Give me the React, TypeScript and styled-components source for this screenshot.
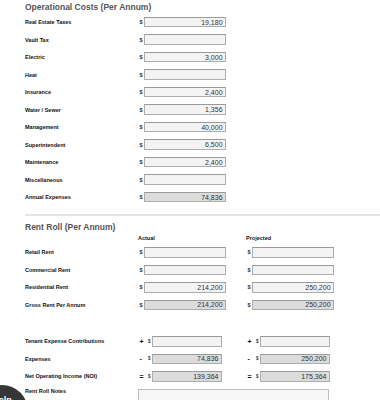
import React, { FC } from "react";
import styled, { createGlobalStyle } from "styled-components";

const GlobalStyle = createGlobalStyle`
  body {
    margin: 0;
    background: #ffffff;
    font-family: "Liberation Sans", Arial, sans-serif;
    overflow: hidden;
  }
`;

const Page = styled.div`
  padding-left: 25px;
`;

const SectionTitle = styled.h2`
  margin: 0;
  height: 13.25px;
  line-height: 15px;
  font-size: 8.5px;
  font-weight: bold;
  color: #555555;
  white-space: nowrap;
`;

const Row = styled.div<{ $height?: number }>`
  display: grid;
  grid-template-columns: 113px 108px 1fr;
  align-items: center;
  height: ${(p) => p.$height ?? 17.5}px;
`;

const Label = styled.span`
  font-size: 5.5px;
  font-weight: bold;
  color: #111111;
  white-space: nowrap;
`;

const ColumnHead = styled.span`
  font-size: 5.5px;
  font-weight: bold;
  color: #111111;
`;

const Cell = styled.div`
  display: flex;
  align-items: center;
`;

const Dollar = styled.span<{ $small?: boolean }>`
  font-size: ${(p) => (p.$small ? 4.5 : 5.5)}px;
  font-weight: bold;
  color: #333333;
  margin-left: ${(p) => (p.$small ? 0 : 1.5)}px;
  margin-right: 1.5px;
`;

const Sign = styled.span`
  width: 10px;
  padding-left: 1.5px;
  box-sizing: border-box;
  font-size: 7px;
  font-weight: bold;
  color: #111111;
`;

const Field = styled.input<{ $total?: boolean; $narrow?: boolean }>`
  box-sizing: border-box;
  width: ${(p) => (p.$narrow ? 70 : 82)}px;
  height: 10.5px;
  margin: 0;
  padding: 0 2.5px 0 2px;
  border: 1px solid #adadad;
  border-top-color: #9a9a9a;
  border-radius: 0;
  background: ${(p) => (p.$total ? "#dcdcdc" : "#f3f3f3")};
  font-family: "Liberation Sans", Arial, sans-serif;
  font-size: 7px;
  color: #333333;
  text-align: right;
  outline: none;
`;

const Divider = styled.hr`
  margin: 8.5px 0 0;
  border: 0;
  height: 1.5px;
  background: #e6e6e6;
`;

const Spacer = styled.div<{ $h: number }>`
  height: ${(p) => p.$h}px;
`;

const NotesRow = styled.div`
  display: grid;
  grid-template-columns: 113px 1fr;
  align-items: start;
`;

const NotesLabel = styled(Label)`
  padding-top: 3px;
`;

const Notes = styled.textarea`
  box-sizing: border-box;
  width: 191px;
  height: 40px;
  margin: 3.5px 0 0;
  border: 1px solid #bdbdbd;
  background: #f6f6f6;
  resize: none;
`;

const HelpButton = styled.div`
  position: fixed;
  left: -24px;
  top: 385px;
  width: 52px;
  height: 52px;
  border-radius: 50%;
  background: #363636;
  color: #ffffff;
  font-size: 9px;
  font-weight: bold;
  text-align: center;
  padding-top: 10px;
  box-sizing: border-box;
`;

const Money: FC<{ value: string; total?: boolean }> = ({ value, total }) => (
  <Cell>
    <Dollar>$</Dollar>
    <Field readOnly value={value} $total={total} />
  </Cell>
);

const SignedMoney: FC<{ sign: string; value: string; total?: boolean }> = ({
  sign,
  value,
  total,
}) => (
  <Cell>
    <Sign>{sign}</Sign>
    <Dollar $small>$</Dollar>
    <Field readOnly value={value} $total={total} $narrow />
  </Cell>
);

const operational = [
  ["Real Estate Taxes", "19,180"],
  ["Vault Tax", ""],
  ["Electric", "3,000"],
  ["Heat", ""],
  ["Insurance", "2,400"],
  ["Water / Sewer", "1,356"],
  ["Management", "40,000"],
  ["Superintendent", "6,500"],
  ["Maintenance", "2,400"],
  ["Miscellaneous", ""],
];

const rentRoll = [
  ["Retail Rent", "", ""],
  ["Commercial Rent", "", ""],
  ["Residential Rent", "214,200", "250,200"],
];

const summary = [
  { label: "Tenant Expense Contributions", sign: "+", actual: "", projected: "", total: false },
  { label: "Expenses", sign: "-", actual: "74,836", projected: "250,200", total: true },
  { label: "Net Operating Income (NOI)", sign: "=", actual: "139,364", projected: "175,364", total: true },
];

const App: FC = () => {
  return (
    <>
      <GlobalStyle />
      <Page>
        <SectionTitle>Operational Costs (Per Annum)</SectionTitle>
        {operational.map(([label, value]) => (
          <Row key={label}>
            <Label>{label}</Label>
            <Money value={value} />
          </Row>
        ))}
        <Row>
          <Label>Annual Expenses</Label>
          <Money value="74,836" total />
        </Row>

        <Divider />

        <Spacer $h={4} />
        <SectionTitle>Rent Roll (Per Annum)</SectionTitle>
        <Row $height={10.5}>
          <span />
          <ColumnHead>Actual</ColumnHead>
          <ColumnHead>Projected</ColumnHead>
        </Row>
        {rentRoll.map(([label, actual, projected]) => (
          <Row key={label}>
            <Label>{label}</Label>
            <Money value={actual} />
            <Money value={projected} />
          </Row>
        ))}
        <Row>
          <Label>Gross Rent Per Annum</Label>
          <Money value="214,200" total />
          <Money value="250,200" total />
        </Row>

        <Spacer $h={19} />
        {summary.map((s) => (
          <Row key={s.label}>
            <Label>{s.label}</Label>
            <SignedMoney sign={s.sign} value={s.actual} total={s.total} />
            <SignedMoney sign={s.sign} value={s.projected} total={s.total} />
          </Row>
        ))}
        <NotesRow>
          <NotesLabel>Rent Roll Notes</NotesLabel>
          <Notes />
        </NotesRow>
      </Page>
      <HelpButton>Help</HelpButton>
    </>
  );
};

export default App;
